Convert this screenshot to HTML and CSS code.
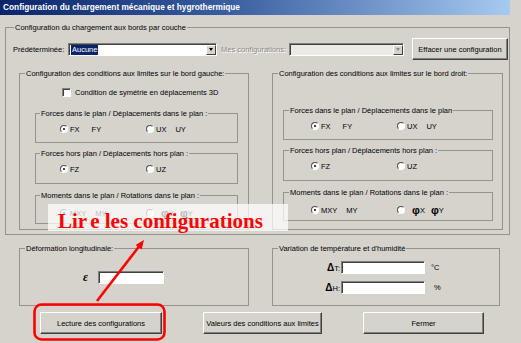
FILE: index.html
```html
<!DOCTYPE html>
<html lang="fr">
<head>
<meta charset="utf-8">
<title>Configuration du chargement</title>
<link rel="stylesheet" href="styles.css">
</head>
<body>
<div class="titlebar">Configuration du chargement mécanique et hygrothermique</div>

<div class="grp outer">
  <div class="lbl">Configuration du chargement aux bords par couche</div>
  <div class="toprow">
    <span class="sel-label">Prédéterminée:</span>
    <div class="combo combo1"><span class="selected">Aucune</span><span class="grow"></span><span class="ddbtn"><i class="tri"></i></span></div>
    <span class="dis-label">Mes configurations:</span>
    <div class="combo combo2 disabled"><span class="grow"></span><span class="ddbtn"><i class="tri dis"></i></span></div>
    <div class="btn btn-eff">Effacer une configuration</div>
  </div>

  <div class="sides">
    <div class="grp side side-l">
      <div class="lbl">Configuration des conditions aux limites sur le bord gauche:</div>
      <div class="chk-row"><span class="chk"></span><span>Condition de symétrie en déplacements 3D</span></div>
      <div class="grp sub f1">
        <div class="lbl">Forces dans le plan / Déplacements dans le plan :</div>
        <div class="radios">
          <div class="opt"><span class="radio on"></span><span>FX</span><span class="sp">FY</span></div>
          <div class="opt"><span class="radio"></span><span>UX</span><span class="sp2">UY</span></div>
        </div>
      </div>
      <div class="grp sub f2">
        <div class="lbl">Forces hors plan / Déplacements hors plan :</div>
        <div class="radios">
          <div class="opt"><span class="radio on"></span><span>FZ</span></div>
          <div class="opt"><span class="radio"></span><span>UZ</span></div>
        </div>
      </div>
      <div class="grp sub f3">
        <div class="lbl">Moments dans le plan / Rotations dans le plan :</div>
        <div class="radios">
          <div class="opt"><span class="radio on"></span><span>MXY</span><span class="sp2">MY</span></div>
          <div class="opt"><span class="radio"></span><span class="phi">φ</span><span>X</span><span class="phi sp3">φ</span><span>Y</span></div>
        </div>
      </div>
    </div>

    <div class="grp side side-r">
      <div class="lbl">Configuration des conditions aux limites sur le bord droit:</div>
      <div class="chk-spacer"></div>
      <div class="grp sub f1">
        <div class="lbl">Forces dans le plan / Déplacements dans le plan</div>
        <div class="radios">
          <div class="opt"><span class="radio on"></span><span>FX</span><span class="sp">FY</span></div>
          <div class="opt"><span class="radio"></span><span>UX</span><span class="sp2">UY</span></div>
        </div>
      </div>
      <div class="grp sub f2">
        <div class="lbl">Forces hors plan / Déplacements hors plan :</div>
        <div class="radios">
          <div class="opt"><span class="radio on"></span><span>FZ</span></div>
          <div class="opt"><span class="radio"></span><span>UZ</span></div>
        </div>
      </div>
      <div class="grp sub f3">
        <div class="lbl">Moments dans le plan / Rotations dans le plan :</div>
        <div class="radios">
          <div class="opt"><span class="radio on"></span><span>MXY</span><span class="sp2">MY</span></div>
          <div class="opt"><span class="radio"></span><span class="phi">φ</span><span>X</span><span class="phi sp3">φ</span><span>Y</span></div>
        </div>
      </div>
    </div>
  </div>
</div>

<div class="bottom">
  <div class="grp b-left">
    <div class="lbl">Déformation longitudinale:</div>
    <div class="eps-row"><span class="eps">ε</span><span class="field fe"></span></div>
  </div>
  <div class="grp b-right">
    <div class="lbl">Variation de température et d'humidité</div>
    <div class="d-row r1"><span class="dlab"><b class="delta">Δ</b>T:</span><span class="field ft"></span><span class="unit u1">°C</span></div>
    <div class="d-row r2"><span class="dlab"><b class="delta">Δ</b>H:</span><span class="field ft"></span><span class="unit u2">%</span></div>
  </div>
</div>

<div class="btns">
  <div class="btn b1">Lecture des configurations</div>
  <div class="btn b2">Valeurs des conditions aux limites</div>
  <div class="btn b3">Fermer</div>
</div>

<div class="note"><div class="note-text">Lir<span class="kern">e</span> les configurations</div></div>

<svg class="marks" width="521" height="343" viewBox="0 0 521 343">
  <rect x="34.5" y="304.5" width="130" height="35" rx="7" ry="7" fill="none" stroke="#ff0000" stroke-width="2.6"/>
  <line x1="97" y1="301" x2="139" y2="246.5" stroke="#ff0000" stroke-width="2.6"/>
  <polygon points="144,240 141.6,249.6 135.6,245" fill="#ff0000"/>
</svg>
</body>
</html>
```

FILE: styles.css
```css
* { box-sizing: border-box; }

body {
  margin: 0;
  width: 521px;
  height: 343px;
  overflow: hidden;
  position: relative;
  background: #d6d3cd;
  font-family: "Liberation Sans", Arial, sans-serif;
  font-size: 7.5px;
  color: #000;
}

.titlebar {
  width: 510px;
  height: 15px;
  background: linear-gradient(to right, #0a246a 0%, #3a5fa0 45%, #a6caf0 100%);
  color: #fff;
  font-weight: bold;
  font-size: 8.3px;
  line-height: 15px;
  padding-left: 3px;
  white-space: nowrap;
}

.grp { border: 1px solid #97938c; }

.lbl {
  margin-top: -5px;
  height: 9px;
  line-height: 9px;
  width: max-content;
  padding: 0 1px;
  background: #d6d3cd;
  white-space: nowrap;
}

.outer {
  margin: 12px 0 0 5px;
  width: 505px;
  height: 208px;
}
.outer > .lbl { margin-left: 8px; }

.toprow {
  display: flex;
  align-items: center;
  height: 22px;
  margin-top: 6px;
  padding-left: 7px;
}
.sel-label { width: 55px; white-space: nowrap; }

.combo {
  display: flex;
  align-items: stretch;
  height: 13px;
  background: #fff;
  border: 1px solid;
  border-color: #808080 #fff #fff #808080;
  box-shadow: inset 1px 1px 0 #404040;
  padding: 1px 0 0 1px;
}
.combo1 { width: 149px; }
.combo2 { width: 115px; }
.combo.disabled { background: #eceae6; }
.selected {
  background: #0a246a;
  color: #fff;
  line-height: 10px;
  padding: 0 1px;
  margin-left: 1px;
}
.grow { flex: 1; }
.ddbtn {
  width: 10px;
  display: flex;
  align-items: center;
  justify-content: center;
  background: #d6d3cd;
  border: 1px solid;
  border-color: #fff #404040 #404040 #fff;
}
.tri {
  width: 0;
  height: 0;
  border-left: 2.5px solid transparent;
  border-right: 2.5px solid transparent;
  border-top: 3px solid #000;
}
.tri.dis { border-top-color: #8d8a85; }

.dis-label {
  width: 68px;
  margin-left: 4px;
  color: #8d8a85;
  text-shadow: 1px 1px 0 #fff;
  white-space: nowrap;
}

.btn {
  display: flex;
  align-items: center;
  justify-content: center;
  height: 22px;
  background: #d6d3cd;
  border: 1px solid;
  border-color: #fff #404040 #404040 #fff;
  box-shadow: inset -1px -1px 0 #808080;
  white-space: nowrap;
}
.btn-eff { width: 96px; margin-left: 8px; }

.sides {
  display: flex;
  gap: 23px;
  margin-top: 13px;
  padding-left: 13px;
}
.side { height: 157px; }
.side-l { width: 230px; }
.side-r { width: 231px; }
.side > .lbl { margin-left: 5px; }

.chk-row {
  display: flex;
  align-items: center;
  height: 10px;
  margin-top: 9px;
  padding-left: 42px;
  white-space: nowrap;
}
.chk {
  width: 9px;
  height: 9px;
  margin-right: 4px;
  background: #fff;
  border: 1px solid;
  border-color: #808080 #fff #fff #808080;
  box-shadow: inset 1px 1px 0 #404040;
}
.chk-spacer { height: 7px; margin-top: 9px; }

.sub { margin-left: 15px; width: 203px; }
.side-r .sub { margin-left: 10px; width: 210px; }
.sub > .lbl { margin-left: 4px; }
.side-r .sub > .lbl { margin-left: 5px; }
.f1 { margin-top: 16px; height: 30px; }
.f2 { margin-top: 10px; height: 31px; }
.f3 { margin-top: 11px; height: 29px; }

.radios {
  display: flex;
  align-items: center;
  height: 10px;
  margin-top: 6px;
  padding-left: 24px;
}
.f3 .radios { margin-top: 8px; }
.side-r .radios { padding-left: 27px; }
.opt {
  display: flex;
  align-items: center;
  width: 86px;
  white-space: nowrap;
}
.radio {
  display: flex;
  align-items: center;
  justify-content: center;
  width: 8px;
  height: 8px;
  margin-right: 2px;
  border-radius: 50%;
  background: #fff;
  border: 1px solid;
  border-color: #505050 #fff #fff #505050;
}
.radio.on::after {
  content: "";
  width: 2px;
  height: 2px;
  border-radius: 50%;
  background: #000;
}
.sp { margin-left: 12px; }
.sp2 { margin-left: 9px; }
.sp3 { margin-left: 6px; }
.phi {
  font-family: "Liberation Sans", Arial, sans-serif;
  font-weight: bold;
  font-size: 11px;
  line-height: 10px;
  margin-left: 5px;
}
.phi.sp3 { margin-left: 6px; }

.bottom {
  display: flex;
  gap: 23px;
  margin-top: 13px;
  padding-left: 19px;
}
.b-left { width: 230px; height: 58px; }
.b-right { width: 228px; height: 58px; }
.bottom .lbl { margin-left: 5px; }

.field {
  display: block;
  height: 13px;
  background: #fff;
  border: 1px solid;
  border-color: #808080 #fff #fff #808080;
  box-shadow: inset 1px 1px 0 #404040;
}
.fe { width: 66px; }
.ft { width: 84px; }

.eps-row {
  display: flex;
  align-items: center;
  height: 13px;
  margin-top: 18px;
  padding-left: 63px;
}
.eps {
  width: 15px;
  font-family: "Liberation Serif", "Times New Roman", serif;
  font-style: italic;
  font-weight: bold;
  font-size: 12px;
}

.d-row {
  display: flex;
  align-items: center;
  height: 13px;
  padding-left: 49px;
}
.r1 { margin-top: 8px; }
.r2 { margin-top: 7px; }
.dlab {
  width: 19px;
  white-space: nowrap;
  text-align: right;
  padding-right: 1px;
}
.delta { font-size: 10px; font-weight: bold; }
.u1 { margin-left: 6px; }
.u2 { margin-left: 9px; }

.btns {
  display: flex;
  gap: 41px;
  margin-top: 6px;
  padding-left: 40px;
}
.b1 { width: 122px; }
.b2 { width: 119px; }
.b3 { width: 121px; }

.note {
  position: absolute;
  left: 48px;
  top: 204px;
  width: 240px;
  height: 27px;
  background: rgba(255, 255, 255, 0.72);
}
.note-text {
  padding-top: 4px;
  padding-left: 10px;
  line-height: 27px;
  height: 27px;
  font-family: "Liberation Serif", "Times New Roman", serif;
  font-weight: bold;
  font-size: 21px;
  color: #ff0000;
  white-space: nowrap;
}
.kern { margin-left: 3px; }

.marks {
  position: absolute;
  left: 0;
  top: 0;
  pointer-events: none;
}
```
